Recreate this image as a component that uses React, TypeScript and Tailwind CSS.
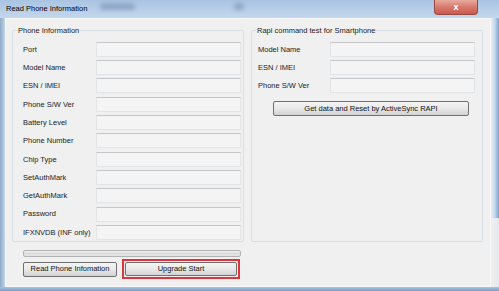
import React from "react";

const font = { fontFamily: '"Liberation Sans", Arial, sans-serif' };

const leftRows = [
  "Port",
  "Model Name",
  "ESN / IMEI",
  "Phone S/W Ver",
  "Battery Level",
  "Phone Number",
  "Chip Type",
  "SetAuthMark",
  "GetAuthMark",
  "Password",
  "IFXNVDB (INF only)",
];

const rightRows = ["Model Name", "ESN / IMEI", "Phone S/W Ver"];

const TextBox: React.FC = () => (
  <div className="w-[145px] h-[15px] bg-[#f4f4f4] border border-[#e2e5e8] border-t-[#c4c6c9]" />
);

const Row: React.FC<{ label: string; labelWidth: string }> = ({ label, labelWidth }) => (
  <div className="flex items-center h-[18.3px]">
    <span className={`${labelWidth} text-[7.5px] text-[#1a1a1a] whitespace-nowrap`}>{label}</span>
    <TextBox />
  </div>
);

const WinButton: React.FC<{ children: React.ReactNode; className?: string }> = ({ children, className }) => (
  <div
    className={`flex items-center justify-center rounded-[2px] border border-[#707070] bg-gradient-to-b from-[#f4f4f4] via-[#e9e9e9] to-[#d2d2d2] text-[7.5px] text-[#111] ${className ?? ""}`}
  >
    {children}
  </div>
);

const GroupBox: React.FC<{ title: string; children: React.ReactNode }> = ({ title, children }) => (
  <fieldset className="w-[232px] h-[217px] border border-[#d5dfe5] rounded-[2px] p-0">
    <legend className="ml-[4px] px-[1px] text-[7.5px] text-[#1a1a1a]">{title}</legend>
    {children}
  </fieldset>
);

export default function App() {
  return (
    <div className="w-[499px] h-[291px] flex flex-col bg-[#b8cfe8] overflow-hidden" style={font}>
      {/* Title bar */}
      <div className="relative h-[18px] flex items-center bg-gradient-to-b from-[#a9c3e2] to-[#c4d8ee]">
        <span className="pl-[6px] text-[7.5px] text-black">Read Phone Information</span>
        <div className="absolute left-[100px] top-[3px] w-[35px] h-[7px] rounded-full bg-[#8ea7c6] blur-[2px]" />
        <div className="absolute left-[234px] top-[3px] w-[10px] h-[7px] rounded-full bg-[#8ea7c6] blur-[2px]" />
        <div className="absolute right-[21px] top-0 w-[44px] h-[15px] rounded-b-[4px] border border-t-0 border-[#9a4a42] bg-gradient-to-b from-[#e8aaa0] via-[#d77a6c] to-[#c85a4e] flex items-center justify-center text-white text-[9px] font-bold leading-none">
          x
        </div>
      </div>

      <div className="flex flex-1">
        {/* left frame */}
        <div className="w-[5px] bg-gradient-to-r from-[#8fa9c8] to-[#c2d6ec]" />

        {/* client area */}
        <div className="flex-1 bg-[#f0f0f0] border border-[#f8f8f8] flex flex-col pl-[6px] pt-[6px]">
          <div className="flex gap-[7px]">
            <GroupBox title="Phone Information">
              <div className="pl-[10px] pt-[4px]">
                {leftRows.map((r) => (
                  <Row key={r} label={r} labelWidth="w-[73px]" />
                ))}
              </div>
            </GroupBox>

            <GroupBox title="Rapi command test for Smartphone">
              <div className="pl-[6px] pt-[4px]">
                {rightRows.map((r) => (
                  <Row key={r} label={r} labelWidth="w-[72px]" />
                ))}
                <WinButton className="ml-[15px] mt-[6px] w-[196px] h-[15px]">
                  Get data and Reset by ActiveSync RAPI
                </WinButton>
              </div>
            </GroupBox>
          </div>

          {/* progress bar */}
          <div className="ml-[11px] mt-[8px] w-[218px] h-[7px] rounded-[2px] border border-[#b2b2b2] bg-gradient-to-b from-[#f2f2f2] via-[#dcdcdc] to-[#e6e6e6]" />

          {/* buttons */}
          <div className="flex items-center ml-[11px] mt-[2px] gap-[5px]">
            <WinButton className="w-[94px] h-[15px]">Read Phone Infomation</WinButton>
            <div className="border-2 border-[#e0343c] p-[1px]">
              <WinButton className="w-[112px] h-[14px]">Upgrade Start</WinButton>
            </div>
          </div>
        </div>

        {/* right frame */}
        <div className="w-[8px] flex flex-col">
          <div className="h-[200px] bg-gradient-to-r from-[#e9eef4] via-[#c2d6ec] to-[#7f9fc6]" />
          <div className="flex-1 bg-gradient-to-r from-[#f0f0f0] to-[#e4e8ec]" />
        </div>
      </div>

      {/* bottom frame */}
      <div className="h-[4px] bg-gradient-to-b from-[#a9c3e2] to-[#7f9cc2]" />
    </div>
  );
}
